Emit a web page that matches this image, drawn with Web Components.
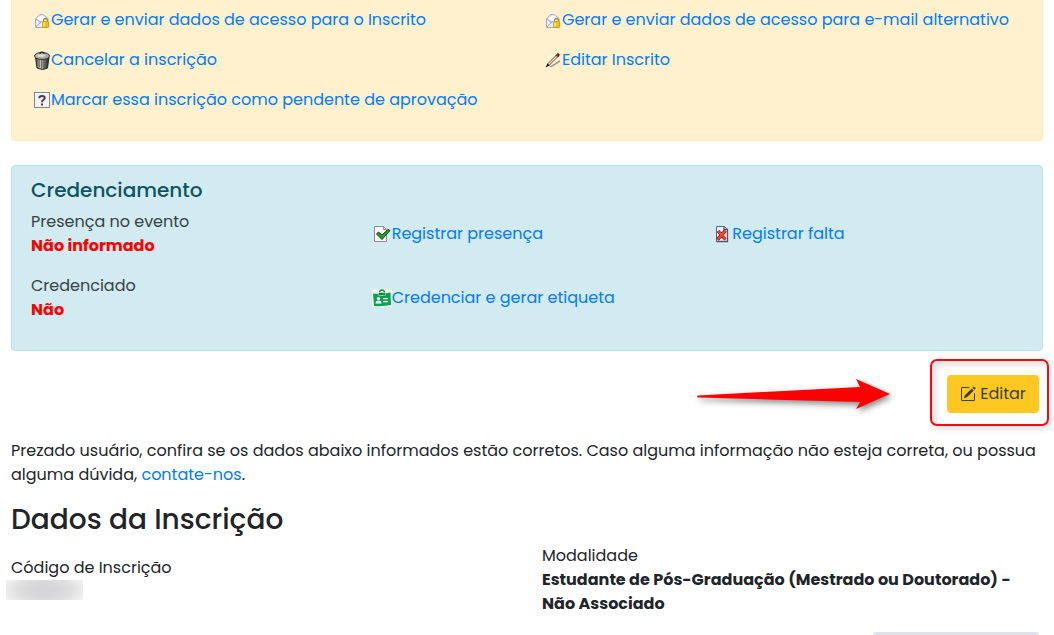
<!DOCTYPE html>
<html lang="pt-BR">
<head>
<meta charset="utf-8">
<meta name="viewport" content="width=device-width, initial-scale=1">
<title>Dados da Inscrição</title>
<style>
  html { height: 100%; overflow: hidden; }
  body { margin: 0; height: 100%; overflow: hidden; background: #fff; color: #212529; font: 16px/24px Poppins, Inter, sans-serif; }
</style>
</head>
<body>
<registration-page></registration-page>

<template id="page-template">
  <style>
    :host { display: block; padding: 0 11px; }
    .actions { position: relative; display: flex; justify-content: flex-end; padding: 24px 4px 26px; }
    p { margin: 0 0 16px; }
    a { color: #007bff; text-decoration: none; }
    h3 { margin: 0 0 8px; font-size: 28px; line-height: 33px; font-weight: 500; }
    .data { display: grid; grid-template-columns: 1fr 1fr; gap: 30px; align-items: center; }
    .footer { display: flex; justify-content: flex-end; padding: 16px 4px 0; }
    .field { width: 166px; height: 38px; background: #dee2ea; border-radius: 4px; }
    callout-arrow { position: absolute; right: 148px; top: 24px; }
  </style>
  <alert-panel kind="warning">
    <link-grid columns="2">
      <icon-link icon="mail">Gerar e enviar dados de acesso para o Inscrito</icon-link>
      <icon-link icon="mail">Gerar e enviar dados de acesso para e-mail alternativo</icon-link>
      <icon-link icon="trash">Cancelar a inscrição</icon-link>
      <icon-link icon="pencil">Editar Inscrito</icon-link>
      <icon-link icon="question">Marcar essa inscrição como pendente de aprovação</icon-link>
    </link-grid>
  </alert-panel>
  <alert-panel kind="info" heading="Credenciamento">
    <link-grid columns="3">
      <data-field label="Presença no evento" tone="danger">Não informado</data-field>
      <icon-link icon="check">Registrar presença</icon-link>
      <icon-link icon="cross">Registrar falta</icon-link>
      <data-field label="Credenciado" tone="danger">Não</data-field>
      <icon-link icon="badge">Credenciar e gerar etiqueta</icon-link>
    </link-grid>
  </alert-panel>
  <div class="actions">
    <callout-arrow></callout-arrow>
    <edit-button>Editar</edit-button>
  </div>
  <p>Prezado usuário, confira se os dados abaixo informados estão corretos. Caso alguma informação não esteja correta, ou possua alguma dúvida, <a href="#contato">contate-nos</a>.</p>
  <h3>Dados da Inscrição</h3>
  <div class="data">
    <data-field label="Código de Inscrição"><redacted-value></redacted-value></data-field>
    <data-field label="Modalidade">Estudante de Pós-Graduação (Mestrado ou Doutorado) - Não Associado</data-field>
  </div>
  <div class="footer"><div class="field"></div></div>
</template>

<script>
const icons = {
  mail: `<svg width="20" height="20" viewBox="0 0 20 20"><path d="M4.500 8.500 9 4.500h3l5 4V17.500H4.500z" fill="#e9edfb" stroke="#a5a8c8"/><path d="M5 8.500 10 5h2l4 3.500-5.500 3.500z" fill="#fff" stroke="#c5c8e2" stroke-width=".7"/><path d="M5 17l5-5.500 1 .5M5 9l5 4" fill="none" stroke="#8d91b5" stroke-width=".8"/><path d="M12.500 12v-1.500a2 2 0 0 1 4 0V12" fill="none" stroke="#a99131" stroke-width="1.300"/><rect x="11.500" y="11.500" width="6" height="6" rx="1" fill="#f0c400" stroke="#be9100" stroke-width=".7"/><path d="M13 12.500v4" stroke="#fff29b" stroke-width="1.200"/></svg>`,
  trash: `<svg width="20" height="20" viewBox="0 0 20 20"><defs><linearGradient id="m"><stop stop-color="#33332f"/><stop offset=".35" stop-color="#c5c6bb"/><stop offset=".6" stop-color="#85867b"/><stop offset="1" stop-color="#1e1e1c"/></linearGradient></defs><path d="M4.500 7h13.500l-1.500 11q-5 3-10.500 0z" fill="url(#m)" stroke="#272724"/><path d="M8 10l.5 7M10.500 10v8M13 10v8M15.500 10l-.7 7" stroke="#444540" stroke-width=".6"/><ellipse cx="11" cy="6" rx="7.500" ry="3.500" fill="#a7a89e" stroke="#343430"/><ellipse cx="10" cy="5.500" rx="4.500" ry="1.700" fill="#d5d6ce"/><path d="M9 4q0-2 2-2t2 2" fill="none" stroke="#222" stroke-width="1.200"/></svg>`,
  pencil: `<svg width="20" height="18" viewBox="0 0 20 18"><path d="M7 16l11-7v2l-8 5z" fill="#9a9a8e"/><path d="M5.500 13 14.500 4l1.500 1.500-9 9z" fill="#f2e2b8" stroke="#2c2414" stroke-width=".8"/><path d="M3.500 16.500l2-4 2 2z" fill="#111"/><path d="M14 4.500l1.500-2q2 0 2 1.500l-1.500 2z" fill="#b31920" stroke="#531015" stroke-width=".6"/></svg>`,
  question: `<svg width="20" height="18" viewBox="0 0 20 18"><rect x="3.500" y="1.500" width="15" height="15" fill="#f2f2f4" stroke="#858585"/><path d="M8.300 7.300q0-2.300 2.700-2.300t2.700 2q0 1.200-1.400 2T11 11.300" fill="none" stroke="#404047" stroke-width="2"/><rect x="10" y="12.500" width="2" height="2" fill="#404047"/></svg>`,
  check: `<svg width="20" height="18" viewBox="0 0 20 18"><path d="M2.500 1.500h9l3 3v12h-12z" fill="#f7f7fb" stroke="#92859f"/><path d="M11.500 1.500v3h3" fill="none" stroke="#92859f"/><path d="M4.500 9l2-2 3.500 3 6-5.500 2 1-8 9z" fill="#2b9828" stroke="#0d4a10"/></svg>`,
  cross: `<svg width="20" height="18" viewBox="0 0 20 18"><path d="M4.500 1.500h8l3 3v12h-11z" fill="#eef3ff" stroke="#47699c"/><path d="M12 1.500v3h3.500v12h-11" fill="none" stroke="#56565e" stroke-width="1.300"/><path d="M6 6l7.500 8.500M13.500 5.500l-8 9" stroke="#8e1712" stroke-width="3.400"/><path d="M6 6l7.500 8M13.500 5.500l-7.500 8.500" stroke="#f04a36" stroke-width="2"/></svg>`,
  badge: `<svg width="20" height="18" viewBox="0 0 20 18"><path d="M0 0h20v18H0z" fill="#eff5ee"/><path d="M1 4.500q9 1 17.500-1l.5 12.500q-8 1.500-17 1z" fill="#0ca052"/><path d="M7.500 4q0-3 2.500-3t2.500 3" fill="none" stroke="#0b8e49" stroke-width="1.300"/><rect x="6.500" y="3.500" width="7" height="3" rx="1" fill="#09864a" stroke="#dff3e5" stroke-width=".6"/><circle cx="6.500" cy="9.500" r="1.600" fill="#fff"/><path d="M3.500 14.500q0-3 3-3t3 3zM11 9h5v1.200h-5zM11 12h5v1.200h-5z" fill="#fff"/></svg>`
};

class RegistrationPage extends HTMLElement {
  constructor() {
    super();
    this.attachShadow({ mode: 'open' }).append(document.getElementById('page-template').content.cloneNode(true));
  }
}

class AlertPanel extends HTMLElement {
  connectedCallback() {
    const heading = this.getAttribute('heading');
    this.attachShadow({ mode: 'open' }).innerHTML = `
      <style>
        :host { display: block; padding: 12px 19px 28px; border: 1px solid #b9e3e9; border-radius: 4px; background: #d1ebf0; color: #374246; }
        :host([kind=warning]) { margin-bottom: 24px; padding-top: 8px; border-color: #ffecb9; border-top: 0; border-radius: 0 0 4px 4px; background: #fff1ce; }
        h5 { margin: 0 0 8px; font-size: 20px; line-height: 24px; font-weight: 500; color: #0c5460; }
      </style>
      ${heading ? `<h5>${heading}</h5>` : ''}<slot></slot>`;
  }
}

class LinkGrid extends HTMLElement {
  connectedCallback() {
    this.attachShadow({ mode: 'open' }).innerHTML = `
      <style>
        :host { display: grid; grid-template-columns: repeat(${this.getAttribute('columns')}, 1fr); gap: 16px 30px; align-items: center; }
      </style><slot></slot>`;
  }
}

class IconLink extends HTMLElement {
  connectedCallback() {
    this.attachShadow({ mode: 'open' }).innerHTML = `
      <style>
        :host { display: block; min-width: 0; }
        a { display: flex; align-items: center; color: #007bff; text-decoration: none; white-space: nowrap; }
        a:hover { text-decoration: underline; }
        svg { flex: none; overflow: visible; }
      </style>
      <a href="#acao">${icons[this.getAttribute('icon')]}<span><slot></slot></span></a>`;
  }
}

class DataField extends HTMLElement {
  connectedCallback() {
    this.attachShadow({ mode: 'open' }).innerHTML = `
      <style>
        :host { display: block; min-height: 48px; }
        strong { display: block; font-weight: 700; }
        :host([tone=danger]) strong { color: #f00; }
      </style>
      <div>${this.getAttribute('label')}</div><strong><slot></slot></strong>`;
  }
}

class RedactedValue extends HTMLElement {
  connectedCallback() {
    this.attachShadow({ mode: 'open' }).innerHTML = `
      <style>
        :host { display: block; width: 77px; height: 20px; margin-left: -5px; background: radial-gradient(ellipse 60% 110%, #d6d6d8 25%, #e0e0e1 60%, #f7f7f7 100%); }
      </style>`;
  }
}

class EditButton extends HTMLElement {
  connectedCallback() {
    this.attachShadow({ mode: 'open' }).innerHTML = `
      <style>
        :host { display: block; position: relative; }
        button { display: flex; align-items: center; justify-content: center; gap: 4px; min-width: 92px; height: 38px; padding: 0 12px; border: 0; border-radius: 4px; background: #ffc721; color: #3a3d40; font: inherit; cursor: pointer; }
        .frame { position: absolute; inset: -16px -10px -13px -17px; border: 2px solid #f50a14; border-radius: 7px; box-shadow: 2px 3px 6px #0002, inset 4px 4px 6px #0002; pointer-events: none; }
      </style>
      <button type="button">
        <svg width="16" height="16" viewBox="0 0 16 16" fill="currentColor"><path d="M15.502 1.940a.5.5 0 0 1 0 .706L14.459 3.690l-2-2L13.502.646a.5.5 0 0 1 .707 0l1.293 1.293zm-1.750 2.456-2-2L4.939 9.210a.5.5 0 0 0-.121.196l-.805 2.414a.25.25 0 0 0 .316.316l2.414-.805a.5.5 0 0 0 .196-.120l6.813-6.814z"/><path fill-rule="evenodd" d="M1 13.500A1.500 1.500 0 0 0 2.500 15h11a1.500 1.500 0 0 0 1.500-1.500v-6a.5.5 0 0 0-1 0v6a.5.5 0 0 1-.5.5h-11a.5.5 0 0 1-.5-.5v-11a.5.5 0 0 1 .5-.5H9a.5.5 0 0 0 0-1H2.500A1.500 1.500 0 0 0 1 2.500z"/></svg>
        <span><slot></slot></span>
      </button>
      <div class="frame"></div>`;
  }
}

class CalloutArrow extends HTMLElement {
  connectedCallback() {
    this.attachShadow({ mode: 'open' }).innerHTML = `
      <style>
        :host { display: block; pointer-events: none; }
        svg { display: block; overflow: visible; filter: drop-shadow(2px 3px 3px #0007); }
      </style>
      <svg width="200" height="40" viewBox="0 0 200 40"><path d="M3 20.500 165 12l-4-8 34 15-34 15 4-7L3 22.500q-2-1 0-2z" fill="#f00"/></svg>`;
  }
}

customElements.define('registration-page', RegistrationPage);
customElements.define('alert-panel', AlertPanel);
customElements.define('link-grid', LinkGrid);
customElements.define('icon-link', IconLink);
customElements.define('data-field', DataField);
customElements.define('redacted-value', RedactedValue);
customElements.define('edit-button', EditButton);
customElements.define('callout-arrow', CalloutArrow);
</script>
</body>
</html>
